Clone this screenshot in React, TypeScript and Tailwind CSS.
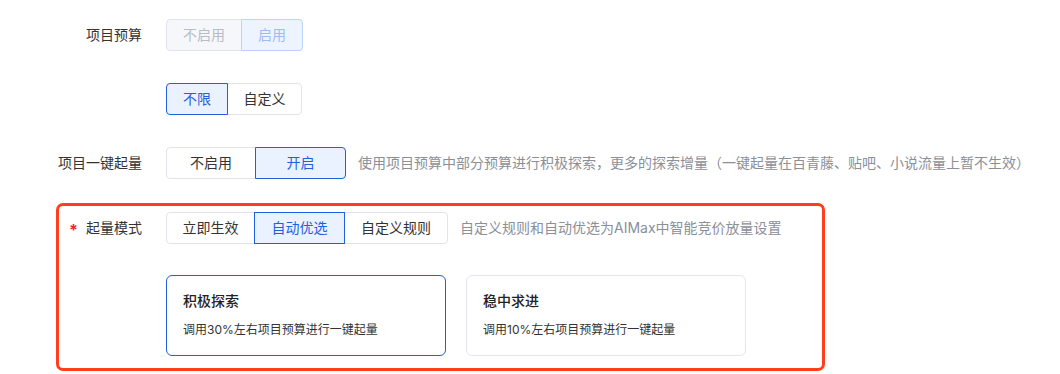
import React, { useState } from 'react';

type Opt = { label: string; w: string };

const Segmented: React.FC<{
  options: Opt[];
  value: number;
  onChange?: (i: number) => void;
  disabled?: boolean;
}> = ({ options, value, onChange, disabled }) => {
  return (
    <div className="flex h-8">
      {options.map((o, i) => {
        const active = i === value;
        let cls = 'border-[#e1e4eb] bg-white text-[#333]';
        if (disabled) {
          cls = active
            ? 'border-[#bcd2ff] bg-[#edf3ff] text-[#9dbcf7] z-10'
            : 'border-[#e1e4eb] bg-[#f5f7fa] text-[#b8bcc4]';
        } else if (active) {
          cls = 'border-[#1f5fe0] bg-[#ebf2ff] text-[#1f5fe0] z-10';
        }
        return (
          <button
            key={o.label}
            onClick={() => !disabled && onChange && onChange(i)}
            className={`relative flex items-center justify-center border text-sm ${o.w} ${cls} ${
              i === 0 ? 'rounded-l-[4px]' : '-ml-px'
            } ${i === options.length - 1 ? 'rounded-r-[4px]' : ''}`}
          >
            {o.label}
          </button>
        );
      })}
    </div>
  );
};

const App: React.FC = () => {
  const [limit, setLimit] = useState(0);
  const [quick, setQuick] = useState(1);
  const [mode, setMode] = useState(1);
  const [card, setCard] = useState(0);

  const cards = [
    { title: '积极探索', desc: '调用30%左右项目预算进行一键起量' },
    { title: '稳中求进', desc: '调用10%左右项目预算进行一键起量' },
  ];

  return (
    <div
      className="bg-white w-[1060px] h-[374px] pt-[19px] text-[#333] overflow-hidden"
      style={{ fontFamily: 'Inter, "Noto Sans CJK SC", sans-serif' }}
    >
      {/* 项目预算 */}
      <div className="flex items-center">
        <div className="w-[142px] text-right text-sm">项目预算</div>
        <div className="ml-6">
          <Segmented
            disabled
            value={1}
            options={[
              { label: '不启用', w: 'w-[76px]' },
              { label: '启用', w: 'w-[62px]' },
            ]}
          />
        </div>
      </div>

      <div className="flex items-center mt-8">
        <div className="ml-[166px]">
          <Segmented
            value={limit}
            onChange={setLimit}
            options={[
              { label: '不限', w: 'w-[62px]' },
              { label: '自定义', w: 'w-[75px]' },
            ]}
          />
        </div>
      </div>

      {/* 项目一键起量 */}
      <div className="flex items-center mt-8">
        <div className="w-[142px] text-right text-sm">项目一键起量</div>
        <div className="ml-6">
          <Segmented
            value={quick}
            onChange={setQuick}
            options={[
              { label: '不启用', w: 'w-[90px]' },
              { label: '开启', w: 'w-[91px]' },
            ]}
          />
        </div>
        <div className="ml-3 text-sm text-[#8a8f99] whitespace-nowrap">
          使用项目预算中部分预算进行积极探索，更多的探索增量（一键起量在百青藤、贴吧、小说流量上暂不生效）
        </div>
      </div>

      {/* 起量模式 */}
      <div className="ml-[56px] mt-6 w-[769px] border-[3px] border-[#ff3d1f] rounded-[7px] pt-[6px] pb-[12px]">
        <div className="flex items-center">
          <div className="w-[83px] flex justify-end items-center text-sm">
            <span className="text-[#e5262f] mr-[8px] text-base font-bold leading-none mt-[3px]">*</span>
            <span>起量模式</span>
          </div>
          <div className="ml-6">
            <Segmented
              value={mode}
              onChange={setMode}
              options={[
                { label: '立即生效', w: 'w-[89px]' },
                { label: '自动优选', w: 'w-[91px]' },
                { label: '自定义规则', w: 'w-[104px]' },
              ]}
            />
          </div>
          <div className="ml-3 text-sm text-[#8a8f99] whitespace-nowrap">
            自定义规则和自动优选为AIMax中智能竞价放量设置
          </div>
        </div>

        <div className="flex gap-5 mt-[31px] pl-[107px]">
          {cards.map((c, i) => (
            <div
              key={c.title}
              onClick={() => setCard(i)}
              className={`w-[280px] h-[81px] rounded-[6px] border px-4 pt-[15px] cursor-pointer ${
                card === i ? 'border-[#1f5fe0]' : 'border-[#e4e6ee]'
              }`}
            >
              <div className="text-sm font-medium leading-5 text-[#222]">{c.title}</div>
              <div className="text-xs leading-4 mt-[11px] text-[#333]">{c.desc}</div>
            </div>
          ))}
        </div>
      </div>
    </div>
  );
};

export default App;
